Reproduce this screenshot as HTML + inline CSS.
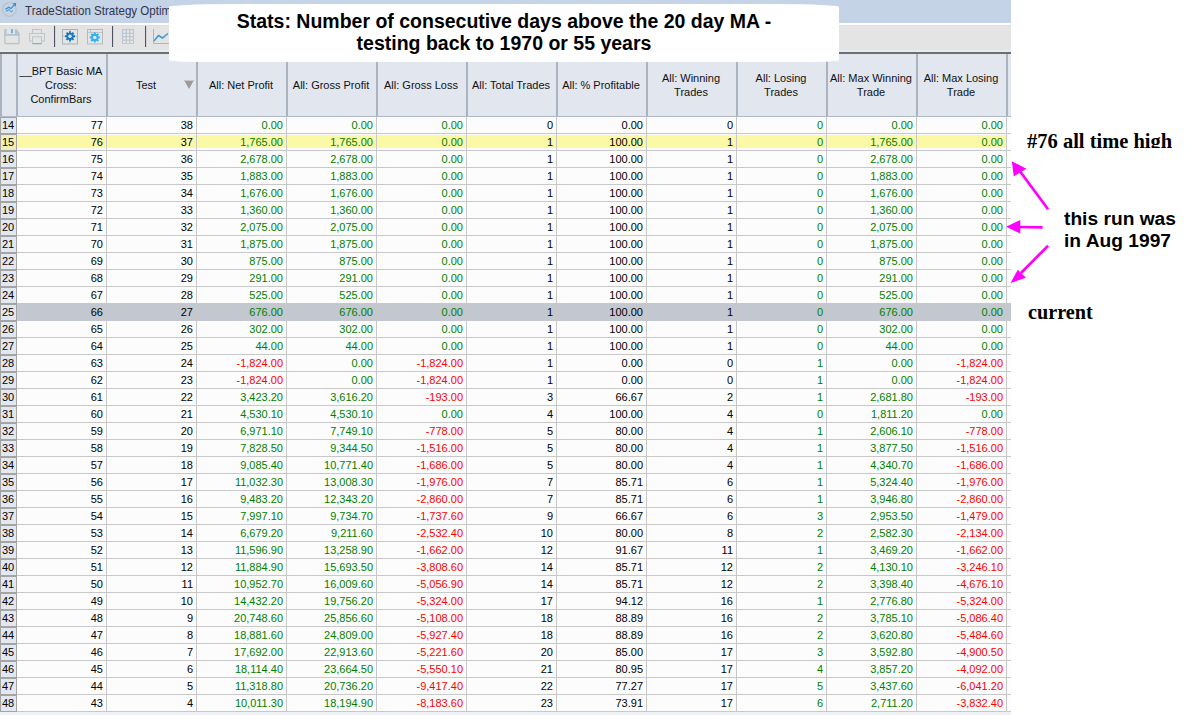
<!DOCTYPE html>
<html><head><meta charset="utf-8">
<style>
html,body{margin:0;padding:0;}
body{width:1195px;height:715px;overflow:hidden;background:#fff;position:relative;font-family:"Liberation Sans",sans-serif;}
.win{position:absolute;left:0;top:0;width:1011px;height:715px;background:#eef1f6;overflow:hidden;}
.title{position:absolute;left:0;top:0;width:1011px;height:23px;background:#c5d3e6;}
.title .t{position:absolute;left:25px;top:3px;font-size:13px;color:#33334a;transform:scaleX(0.89);transform-origin:0 0;white-space:nowrap;}
.wl{position:absolute;left:0;top:23px;width:1011px;height:2px;background:#fdfdfd;}
.tb{position:absolute;left:0;top:25px;width:1011px;height:25px;background:#e4e4e4;}
.tbl{position:absolute;left:0;top:50px;width:1011px;height:2px;background:#e6eaf1;}
.dk{position:absolute;left:0;top:52px;width:1011px;height:2px;background:#6e6e6e;}
.hdr{position:absolute;left:0;top:54px;width:1011px;height:62px;background:#e1e6ef;}
.hb{position:absolute;left:0;top:116px;width:1011px;height:1px;background:#b0bac6;}
.hc{position:absolute;top:54px;width:88px;height:62px;display:flex;align-items:center;justify-content:center;text-align:center;font-size:11px;line-height:14px;color:#111;}
.hs{position:absolute;top:54px;width:2px;height:63px;background:#a9b4c0;}
.hs0{position:absolute;top:54px;left:0;width:2px;height:63px;background:#a9b4c0;}
.row{position:absolute;left:0;width:1011px;height:16px;background:#fcfcfc;border-bottom:1px solid #c8c8c8;}
.row.hl::before{content:"";position:absolute;left:17px;width:990px;top:1px;height:13px;background:#fbf9a6;}
.row.hl u{background:#eef0b6;}
.row.sel::before{content:"";position:absolute;left:17px;right:0;top:-1px;height:18px;background:#c3c7cf;}
.row u{position:absolute;left:0;top:0;text-decoration:none;background:#e3e8f0;border:1px solid #a4a4a4;font-size:11px;line-height:15px;padding-left:1px;box-sizing:border-box;width:17px;height:17px;color:#000;}
.row i{position:absolute;top:0;width:86px;height:16px;font-style:normal;font-size:11px;line-height:16px;text-align:right;color:#000;}
.row i.g{color:#008000;}
.row i.r{color:#ff0000;}
.vl{position:absolute;top:117px;width:1px;height:595px;background:#c8c8c8;}
.bot{position:absolute;left:0;top:712px;width:1011px;height:3px;background:#eef1f5;}
.ovl{position:absolute;left:169px;top:4px;width:670px;height:58px;background:#fff;border-radius:60px 60px 30px 30px / 3px 3px 2px 2px;text-align:center;font-weight:bold;font-size:19.5px;line-height:22px;color:#000;}
.ovl div{padding-top:6px;}
.ann{position:absolute;font-weight:bold;color:#000;}
.serif{font-family:"Liberation Serif",serif;}
</style></head><body>
<div class="win">
  <div class="title">
    <svg style="position:absolute;left:0;top:0" width="20" height="20" viewBox="0 0 20 20">
      <circle cx="9.4" cy="9.5" r="6.8" fill="none" stroke="#bcc3cb" stroke-width="1.3"/>
      <circle cx="9.4" cy="9.5" r="5.2" fill="none" stroke="#cdd4dc" stroke-width="0.6"/>
      <path d="M5.5 9.3 L8.8 7.3 L10.8 8.6 L14.6 4.6" fill="none" stroke="#2f8fd6" stroke-width="1.2"/>
      <path d="M6 11.3 L9 9.6 L11.3 11.8 L12.8 10.6" fill="none" stroke="#2f8fd6" stroke-width="1"/>
      <path d="M12.6 3.4 L16.2 2.8 L15.8 6.4 Z" fill="#2f8fd6"/>
    </svg>
    <div class="t">TradeStation Strategy Optimization Report</div>
  </div>
  <div class="wl"></div>
  <div class="tb">
    <svg style="position:absolute;left:0;top:0" width="170" height="25" viewBox="0 0 170 25">
      <!-- save -->
      <g fill="#b6c3cc">
        <rect x="4.2" y="4" width="2.3" height="6.5"/>
        <path d="M15 4 H16.6 L19.6 8.2 V10.5 H15 Z"/>
        <rect x="4.2" y="9" width="15.4" height="1.6"/>
      </g>
      <rect x="4.85" y="9.6" width="14.1" height="9.1" rx="1" fill="none" stroke="#b6c3cc" stroke-width="1.3"/>
      <rect x="11" y="4" width="1.9" height="4.2" fill="#4dbdf3"/>
      <!-- printer -->
      <rect x="32.5" y="4.5" width="9" height="4" fill="none" stroke="#bcc6cd" stroke-width="1"/>
      <rect x="29.5" y="8.5" width="15" height="7.5" fill="none" stroke="#bcc6cd" stroke-width="1"/>
      <rect x="32.5" y="11.8" width="9" height="6.8" fill="#e4e4e4" stroke="#bcc6cd" stroke-width="1"/>
      <rect x="32.5" y="18.2" width="9" height="1" fill="#8ea1ad"/>
      <!-- sep -->
      <rect x="54" y="1" width="1.1" height="21" fill="#4c5361"/>
      <!-- gear box 1 -->
      <rect x="62.5" y="4.5" width="15" height="14.5" fill="none" stroke="#aab3ba" stroke-width="1"/>
      <path d="M70 5 V18.5 M63 11.3 H77" stroke="#b7c0c7" stroke-width="1.1"/>
      <g transform="translate(70,11.3)" fill="#1578c4">
        <circle r="3.6"/>
        <rect x="-1" y="-5" width="2" height="10"/>
        <rect x="-5" y="-1" width="10" height="2"/>
        <rect x="-1" y="-5" width="2" height="10" transform="rotate(45)"/>
        <rect x="-1" y="-5" width="2" height="10" transform="rotate(-45)"/>
        <circle r="1.7" fill="#e6e6e6"/>
      </g>
      <!-- gear box 2 -->
      <rect x="87.5" y="4.5" width="15" height="14.5" fill="none" stroke="#b3bcc2" stroke-width="1"/>
      <path d="M88 7.5 H102 M90.5 5 V7.5" stroke="#b3bcc2" stroke-width="0.8"/>
      <g transform="translate(94.8,12.4)" fill="#33b2f2">
        <circle r="3.6"/>
        <rect x="-1" y="-5" width="2" height="10"/>
        <rect x="-5" y="-1" width="10" height="2"/>
        <rect x="-1" y="-5" width="2" height="10" transform="rotate(45)"/>
        <rect x="-1" y="-5" width="2" height="10" transform="rotate(-45)"/>
        <circle r="1.7" fill="#e6e6e6"/>
      </g>
      <!-- sep -->
      <rect x="112" y="1" width="1.1" height="21" fill="#4c5361"/>
      <!-- grid -->
      <rect x="122" y="4" width="12" height="15" fill="#bcc6ce"/>
      <g fill="#e6e8ea">
        <rect x="123.2" y="5.3" width="2.4" height="2.3"/><rect x="126.8" y="5.3" width="2.4" height="2.3"/><rect x="130.4" y="5.3" width="2.4" height="2.3"/>
        <rect x="123.2" y="8.8" width="2.4" height="2.3"/><rect x="126.8" y="8.8" width="2.4" height="2.3"/><rect x="130.4" y="8.8" width="2.4" height="2.3"/>
        <rect x="123.2" y="12.3" width="2.4" height="2.3"/><rect x="126.8" y="12.3" width="2.4" height="2.3"/><rect x="130.4" y="12.3" width="2.4" height="2.3"/>
        <rect x="123.2" y="15.8" width="2.4" height="2.3"/><rect x="126.8" y="15.8" width="2.4" height="2.3"/><rect x="130.4" y="15.8" width="2.4" height="2.3"/>
      </g>
      <!-- sep -->
      <rect x="145" y="1" width="1.1" height="21" fill="#4c5361"/>
      <!-- chart -->
      <path d="M153.5 4 V18.5 H170" fill="none" stroke="#aab6c0" stroke-width="1"/>
      <path d="M154 16 L158.5 10.5 L162.5 13 L168 8.5" fill="none" stroke="#3a98d8" stroke-width="1.5"/>
    </svg>
  </div>
  <div class="tbl"></div><div style="position:absolute;left:0;top:25px;width:1011px;height:1px;background:#d9dfea"></div>
  <div class="dk"></div>
  <div class="hdr"></div>
  <div class="hs0"></div>
  
  <div class="hs" style="left:16px"></div><div class="hs" style="left:106px"></div><div class="hs" style="left:196px"></div><div class="hs" style="left:286px"></div><div class="hs" style="left:376px"></div><div class="hs" style="left:466px"></div><div class="hs" style="left:556px"></div><div class="hs" style="left:646px"></div><div class="hs" style="left:736px"></div><div class="hs" style="left:826px"></div><div class="hs" style="left:916px"></div><div class="hs" style="left:1006px"></div>
  <div class="hc" style="left:17px;width:88px"><span>__BPT Basic MA<br>Cross:<br>ConfirmBars</span></div><div class="hc" style="left:107px;width:78px"><span>Test</span></div><div class="hc" style="left:197px;width:88px"><span>All: Net Profit</span></div><div class="hc" style="left:287px;width:88px"><span>All: Gross Profit</span></div><div class="hc" style="left:377px;width:88px"><span>All: Gross Loss</span></div><div class="hc" style="left:467px;width:88px"><span>All: Total Trades</span></div><div class="hc" style="left:557px;width:88px"><span>All: % Profitable</span></div><div class="hc" style="left:647px;width:88px"><span>All: Winning<br>Trades</span></div><div class="hc" style="left:737px;width:88px"><span>All: Losing<br>Trades</span></div><div class="hc" style="left:827px;width:88px"><span>All: Max Winning<br>Trade</span></div><div class="hc" style="left:917px;width:88px"><span>All: Max Losing<br>Trade</span></div>
  <svg style="position:absolute;left:184px;top:80px" width="10" height="9" viewBox="0 0 10 9"><path d="M0 0 H10 L5 9 Z" fill="#9a9a9a"/><path d="M0.5 0.5 H9.5" stroke="#c8c8c8" stroke-width="1"/></svg>
  <div class="hb"></div>
  <div class="row" style="top:117px"><u>14</u><i class="b" style="left:17px">77</i><i class="b" style="left:107px">38</i><i class="g" style="left:197px">0.00</i><i class="g" style="left:287px">0.00</i><i class="g" style="left:377px">0.00</i><i class="b" style="left:467px">0</i><i class="b" style="left:557px">0.00</i><i class="b" style="left:647px">0</i><i class="g" style="left:737px">0</i><i class="g" style="left:827px">0.00</i><i class="g" style="left:917px">0.00</i></div>
<div class="row hl" style="top:134px"><u>15</u><i class="b" style="left:17px">76</i><i class="b" style="left:107px">37</i><i class="g" style="left:197px">1,765.00</i><i class="g" style="left:287px">1,765.00</i><i class="g" style="left:377px">0.00</i><i class="b" style="left:467px">1</i><i class="b" style="left:557px">100.00</i><i class="b" style="left:647px">1</i><i class="g" style="left:737px">0</i><i class="g" style="left:827px">1,765.00</i><i class="g" style="left:917px">0.00</i></div>
<div class="row" style="top:151px"><u>16</u><i class="b" style="left:17px">75</i><i class="b" style="left:107px">36</i><i class="g" style="left:197px">2,678.00</i><i class="g" style="left:287px">2,678.00</i><i class="g" style="left:377px">0.00</i><i class="b" style="left:467px">1</i><i class="b" style="left:557px">100.00</i><i class="b" style="left:647px">1</i><i class="g" style="left:737px">0</i><i class="g" style="left:827px">2,678.00</i><i class="g" style="left:917px">0.00</i></div>
<div class="row" style="top:168px"><u>17</u><i class="b" style="left:17px">74</i><i class="b" style="left:107px">35</i><i class="g" style="left:197px">1,883.00</i><i class="g" style="left:287px">1,883.00</i><i class="g" style="left:377px">0.00</i><i class="b" style="left:467px">1</i><i class="b" style="left:557px">100.00</i><i class="b" style="left:647px">1</i><i class="g" style="left:737px">0</i><i class="g" style="left:827px">1,883.00</i><i class="g" style="left:917px">0.00</i></div>
<div class="row" style="top:185px"><u>18</u><i class="b" style="left:17px">73</i><i class="b" style="left:107px">34</i><i class="g" style="left:197px">1,676.00</i><i class="g" style="left:287px">1,676.00</i><i class="g" style="left:377px">0.00</i><i class="b" style="left:467px">1</i><i class="b" style="left:557px">100.00</i><i class="b" style="left:647px">1</i><i class="g" style="left:737px">0</i><i class="g" style="left:827px">1,676.00</i><i class="g" style="left:917px">0.00</i></div>
<div class="row" style="top:202px"><u>19</u><i class="b" style="left:17px">72</i><i class="b" style="left:107px">33</i><i class="g" style="left:197px">1,360.00</i><i class="g" style="left:287px">1,360.00</i><i class="g" style="left:377px">0.00</i><i class="b" style="left:467px">1</i><i class="b" style="left:557px">100.00</i><i class="b" style="left:647px">1</i><i class="g" style="left:737px">0</i><i class="g" style="left:827px">1,360.00</i><i class="g" style="left:917px">0.00</i></div>
<div class="row" style="top:219px"><u>20</u><i class="b" style="left:17px">71</i><i class="b" style="left:107px">32</i><i class="g" style="left:197px">2,075.00</i><i class="g" style="left:287px">2,075.00</i><i class="g" style="left:377px">0.00</i><i class="b" style="left:467px">1</i><i class="b" style="left:557px">100.00</i><i class="b" style="left:647px">1</i><i class="g" style="left:737px">0</i><i class="g" style="left:827px">2,075.00</i><i class="g" style="left:917px">0.00</i></div>
<div class="row" style="top:236px"><u>21</u><i class="b" style="left:17px">70</i><i class="b" style="left:107px">31</i><i class="g" style="left:197px">1,875.00</i><i class="g" style="left:287px">1,875.00</i><i class="g" style="left:377px">0.00</i><i class="b" style="left:467px">1</i><i class="b" style="left:557px">100.00</i><i class="b" style="left:647px">1</i><i class="g" style="left:737px">0</i><i class="g" style="left:827px">1,875.00</i><i class="g" style="left:917px">0.00</i></div>
<div class="row" style="top:253px"><u>22</u><i class="b" style="left:17px">69</i><i class="b" style="left:107px">30</i><i class="g" style="left:197px">875.00</i><i class="g" style="left:287px">875.00</i><i class="g" style="left:377px">0.00</i><i class="b" style="left:467px">1</i><i class="b" style="left:557px">100.00</i><i class="b" style="left:647px">1</i><i class="g" style="left:737px">0</i><i class="g" style="left:827px">875.00</i><i class="g" style="left:917px">0.00</i></div>
<div class="row" style="top:270px"><u>23</u><i class="b" style="left:17px">68</i><i class="b" style="left:107px">29</i><i class="g" style="left:197px">291.00</i><i class="g" style="left:287px">291.00</i><i class="g" style="left:377px">0.00</i><i class="b" style="left:467px">1</i><i class="b" style="left:557px">100.00</i><i class="b" style="left:647px">1</i><i class="g" style="left:737px">0</i><i class="g" style="left:827px">291.00</i><i class="g" style="left:917px">0.00</i></div>
<div class="row" style="top:287px"><u>24</u><i class="b" style="left:17px">67</i><i class="b" style="left:107px">28</i><i class="g" style="left:197px">525.00</i><i class="g" style="left:287px">525.00</i><i class="g" style="left:377px">0.00</i><i class="b" style="left:467px">1</i><i class="b" style="left:557px">100.00</i><i class="b" style="left:647px">1</i><i class="g" style="left:737px">0</i><i class="g" style="left:827px">525.00</i><i class="g" style="left:917px">0.00</i></div>
<div class="row sel" style="top:304px"><u>25</u><i class="b" style="left:17px">66</i><i class="b" style="left:107px">27</i><i class="g" style="left:197px">676.00</i><i class="g" style="left:287px">676.00</i><i class="g" style="left:377px">0.00</i><i class="b" style="left:467px">1</i><i class="b" style="left:557px">100.00</i><i class="b" style="left:647px">1</i><i class="g" style="left:737px">0</i><i class="g" style="left:827px">676.00</i><i class="g" style="left:917px">0.00</i></div>
<div class="row" style="top:321px"><u>26</u><i class="b" style="left:17px">65</i><i class="b" style="left:107px">26</i><i class="g" style="left:197px">302.00</i><i class="g" style="left:287px">302.00</i><i class="g" style="left:377px">0.00</i><i class="b" style="left:467px">1</i><i class="b" style="left:557px">100.00</i><i class="b" style="left:647px">1</i><i class="g" style="left:737px">0</i><i class="g" style="left:827px">302.00</i><i class="g" style="left:917px">0.00</i></div>
<div class="row" style="top:338px"><u>27</u><i class="b" style="left:17px">64</i><i class="b" style="left:107px">25</i><i class="g" style="left:197px">44.00</i><i class="g" style="left:287px">44.00</i><i class="g" style="left:377px">0.00</i><i class="b" style="left:467px">1</i><i class="b" style="left:557px">100.00</i><i class="b" style="left:647px">1</i><i class="g" style="left:737px">0</i><i class="g" style="left:827px">44.00</i><i class="g" style="left:917px">0.00</i></div>
<div class="row" style="top:355px"><u>28</u><i class="b" style="left:17px">63</i><i class="b" style="left:107px">24</i><i class="r" style="left:197px">-1,824.00</i><i class="g" style="left:287px">0.00</i><i class="r" style="left:377px">-1,824.00</i><i class="b" style="left:467px">1</i><i class="b" style="left:557px">0.00</i><i class="b" style="left:647px">0</i><i class="g" style="left:737px">1</i><i class="g" style="left:827px">0.00</i><i class="r" style="left:917px">-1,824.00</i></div>
<div class="row" style="top:372px"><u>29</u><i class="b" style="left:17px">62</i><i class="b" style="left:107px">23</i><i class="r" style="left:197px">-1,824.00</i><i class="g" style="left:287px">0.00</i><i class="r" style="left:377px">-1,824.00</i><i class="b" style="left:467px">1</i><i class="b" style="left:557px">0.00</i><i class="b" style="left:647px">0</i><i class="g" style="left:737px">1</i><i class="g" style="left:827px">0.00</i><i class="r" style="left:917px">-1,824.00</i></div>
<div class="row" style="top:389px"><u>30</u><i class="b" style="left:17px">61</i><i class="b" style="left:107px">22</i><i class="g" style="left:197px">3,423.20</i><i class="g" style="left:287px">3,616.20</i><i class="r" style="left:377px">-193.00</i><i class="b" style="left:467px">3</i><i class="b" style="left:557px">66.67</i><i class="b" style="left:647px">2</i><i class="g" style="left:737px">1</i><i class="g" style="left:827px">2,681.80</i><i class="r" style="left:917px">-193.00</i></div>
<div class="row" style="top:406px"><u>31</u><i class="b" style="left:17px">60</i><i class="b" style="left:107px">21</i><i class="g" style="left:197px">4,530.10</i><i class="g" style="left:287px">4,530.10</i><i class="g" style="left:377px">0.00</i><i class="b" style="left:467px">4</i><i class="b" style="left:557px">100.00</i><i class="b" style="left:647px">4</i><i class="g" style="left:737px">0</i><i class="g" style="left:827px">1,811.20</i><i class="g" style="left:917px">0.00</i></div>
<div class="row" style="top:423px"><u>32</u><i class="b" style="left:17px">59</i><i class="b" style="left:107px">20</i><i class="g" style="left:197px">6,971.10</i><i class="g" style="left:287px">7,749.10</i><i class="r" style="left:377px">-778.00</i><i class="b" style="left:467px">5</i><i class="b" style="left:557px">80.00</i><i class="b" style="left:647px">4</i><i class="g" style="left:737px">1</i><i class="g" style="left:827px">2,606.10</i><i class="r" style="left:917px">-778.00</i></div>
<div class="row" style="top:440px"><u>33</u><i class="b" style="left:17px">58</i><i class="b" style="left:107px">19</i><i class="g" style="left:197px">7,828.50</i><i class="g" style="left:287px">9,344.50</i><i class="r" style="left:377px">-1,516.00</i><i class="b" style="left:467px">5</i><i class="b" style="left:557px">80.00</i><i class="b" style="left:647px">4</i><i class="g" style="left:737px">1</i><i class="g" style="left:827px">3,877.50</i><i class="r" style="left:917px">-1,516.00</i></div>
<div class="row" style="top:457px"><u>34</u><i class="b" style="left:17px">57</i><i class="b" style="left:107px">18</i><i class="g" style="left:197px">9,085.40</i><i class="g" style="left:287px">10,771.40</i><i class="r" style="left:377px">-1,686.00</i><i class="b" style="left:467px">5</i><i class="b" style="left:557px">80.00</i><i class="b" style="left:647px">4</i><i class="g" style="left:737px">1</i><i class="g" style="left:827px">4,340.70</i><i class="r" style="left:917px">-1,686.00</i></div>
<div class="row" style="top:474px"><u>35</u><i class="b" style="left:17px">56</i><i class="b" style="left:107px">17</i><i class="g" style="left:197px">11,032.30</i><i class="g" style="left:287px">13,008.30</i><i class="r" style="left:377px">-1,976.00</i><i class="b" style="left:467px">7</i><i class="b" style="left:557px">85.71</i><i class="b" style="left:647px">6</i><i class="g" style="left:737px">1</i><i class="g" style="left:827px">5,324.40</i><i class="r" style="left:917px">-1,976.00</i></div>
<div class="row" style="top:491px"><u>36</u><i class="b" style="left:17px">55</i><i class="b" style="left:107px">16</i><i class="g" style="left:197px">9,483.20</i><i class="g" style="left:287px">12,343.20</i><i class="r" style="left:377px">-2,860.00</i><i class="b" style="left:467px">7</i><i class="b" style="left:557px">85.71</i><i class="b" style="left:647px">6</i><i class="g" style="left:737px">1</i><i class="g" style="left:827px">3,946.80</i><i class="r" style="left:917px">-2,860.00</i></div>
<div class="row" style="top:508px"><u>37</u><i class="b" style="left:17px">54</i><i class="b" style="left:107px">15</i><i class="g" style="left:197px">7,997.10</i><i class="g" style="left:287px">9,734.70</i><i class="r" style="left:377px">-1,737.60</i><i class="b" style="left:467px">9</i><i class="b" style="left:557px">66.67</i><i class="b" style="left:647px">6</i><i class="g" style="left:737px">3</i><i class="g" style="left:827px">2,953.50</i><i class="r" style="left:917px">-1,479.00</i></div>
<div class="row" style="top:525px"><u>38</u><i class="b" style="left:17px">53</i><i class="b" style="left:107px">14</i><i class="g" style="left:197px">6,679.20</i><i class="g" style="left:287px">9,211.60</i><i class="r" style="left:377px">-2,532.40</i><i class="b" style="left:467px">10</i><i class="b" style="left:557px">80.00</i><i class="b" style="left:647px">8</i><i class="g" style="left:737px">2</i><i class="g" style="left:827px">2,582.30</i><i class="r" style="left:917px">-2,134.00</i></div>
<div class="row" style="top:542px"><u>39</u><i class="b" style="left:17px">52</i><i class="b" style="left:107px">13</i><i class="g" style="left:197px">11,596.90</i><i class="g" style="left:287px">13,258.90</i><i class="r" style="left:377px">-1,662.00</i><i class="b" style="left:467px">12</i><i class="b" style="left:557px">91.67</i><i class="b" style="left:647px">11</i><i class="g" style="left:737px">1</i><i class="g" style="left:827px">3,469.20</i><i class="r" style="left:917px">-1,662.00</i></div>
<div class="row" style="top:559px"><u>40</u><i class="b" style="left:17px">51</i><i class="b" style="left:107px">12</i><i class="g" style="left:197px">11,884.90</i><i class="g" style="left:287px">15,693.50</i><i class="r" style="left:377px">-3,808.60</i><i class="b" style="left:467px">14</i><i class="b" style="left:557px">85.71</i><i class="b" style="left:647px">12</i><i class="g" style="left:737px">2</i><i class="g" style="left:827px">4,130.10</i><i class="r" style="left:917px">-3,246.10</i></div>
<div class="row" style="top:576px"><u>41</u><i class="b" style="left:17px">50</i><i class="b" style="left:107px">11</i><i class="g" style="left:197px">10,952.70</i><i class="g" style="left:287px">16,009.60</i><i class="r" style="left:377px">-5,056.90</i><i class="b" style="left:467px">14</i><i class="b" style="left:557px">85.71</i><i class="b" style="left:647px">12</i><i class="g" style="left:737px">2</i><i class="g" style="left:827px">3,398.40</i><i class="r" style="left:917px">-4,676.10</i></div>
<div class="row" style="top:593px"><u>42</u><i class="b" style="left:17px">49</i><i class="b" style="left:107px">10</i><i class="g" style="left:197px">14,432.20</i><i class="g" style="left:287px">19,756.20</i><i class="r" style="left:377px">-5,324.00</i><i class="b" style="left:467px">17</i><i class="b" style="left:557px">94.12</i><i class="b" style="left:647px">16</i><i class="g" style="left:737px">1</i><i class="g" style="left:827px">2,776.80</i><i class="r" style="left:917px">-5,324.00</i></div>
<div class="row" style="top:610px"><u>43</u><i class="b" style="left:17px">48</i><i class="b" style="left:107px">9</i><i class="g" style="left:197px">20,748.60</i><i class="g" style="left:287px">25,856.60</i><i class="r" style="left:377px">-5,108.00</i><i class="b" style="left:467px">18</i><i class="b" style="left:557px">88.89</i><i class="b" style="left:647px">16</i><i class="g" style="left:737px">2</i><i class="g" style="left:827px">3,785.10</i><i class="r" style="left:917px">-5,086.40</i></div>
<div class="row" style="top:627px"><u>44</u><i class="b" style="left:17px">47</i><i class="b" style="left:107px">8</i><i class="g" style="left:197px">18,881.60</i><i class="g" style="left:287px">24,809.00</i><i class="r" style="left:377px">-5,927.40</i><i class="b" style="left:467px">18</i><i class="b" style="left:557px">88.89</i><i class="b" style="left:647px">16</i><i class="g" style="left:737px">2</i><i class="g" style="left:827px">3,620.80</i><i class="r" style="left:917px">-5,484.60</i></div>
<div class="row" style="top:644px"><u>45</u><i class="b" style="left:17px">46</i><i class="b" style="left:107px">7</i><i class="g" style="left:197px">17,692.00</i><i class="g" style="left:287px">22,913.60</i><i class="r" style="left:377px">-5,221.60</i><i class="b" style="left:467px">20</i><i class="b" style="left:557px">85.00</i><i class="b" style="left:647px">17</i><i class="g" style="left:737px">3</i><i class="g" style="left:827px">3,592.80</i><i class="r" style="left:917px">-4,900.50</i></div>
<div class="row" style="top:661px"><u>46</u><i class="b" style="left:17px">45</i><i class="b" style="left:107px">6</i><i class="g" style="left:197px">18,114.40</i><i class="g" style="left:287px">23,664.50</i><i class="r" style="left:377px">-5,550.10</i><i class="b" style="left:467px">21</i><i class="b" style="left:557px">80.95</i><i class="b" style="left:647px">17</i><i class="g" style="left:737px">4</i><i class="g" style="left:827px">3,857.20</i><i class="r" style="left:917px">-4,092.00</i></div>
<div class="row" style="top:678px"><u>47</u><i class="b" style="left:17px">44</i><i class="b" style="left:107px">5</i><i class="g" style="left:197px">11,318.80</i><i class="g" style="left:287px">20,736.20</i><i class="r" style="left:377px">-9,417.40</i><i class="b" style="left:467px">22</i><i class="b" style="left:557px">77.27</i><i class="b" style="left:647px">17</i><i class="g" style="left:737px">5</i><i class="g" style="left:827px">3,437.60</i><i class="r" style="left:917px">-6,041.20</i></div>
<div class="row" style="top:695px"><u>48</u><i class="b" style="left:17px">43</i><i class="b" style="left:107px">4</i><i class="g" style="left:197px">10,011.30</i><i class="g" style="left:287px">18,194.90</i><i class="r" style="left:377px">-8,183.60</i><i class="b" style="left:467px">23</i><i class="b" style="left:557px">73.91</i><i class="b" style="left:647px">17</i><i class="g" style="left:737px">6</i><i class="g" style="left:827px">2,711.20</i><i class="r" style="left:917px">-3,832.40</i></div>
  <div class="vl" style="left:106px"></div><div class="vl" style="left:196px"></div><div class="vl" style="left:286px"></div><div class="vl" style="left:376px"></div><div class="vl" style="left:466px"></div><div class="vl" style="left:556px"></div><div class="vl" style="left:646px"></div><div class="vl" style="left:736px"></div><div class="vl" style="left:826px"></div><div class="vl" style="left:916px"></div><div class="vl" style="left:1006px"></div>
  <div class="bot"></div>
</div>
<div class="ovl"><div>Stats: Number of consecutive days above the 20 day MA -<br>testing back to 1970 or 55 years</div></div>
<div class="ann serif" style="left:1027px;top:129px;font-size:20.5px;height:19px;overflow:hidden;line-height:24px;white-space:nowrap;">#76 all time high</div>
<div class="ann" style="left:1064px;top:208px;font-size:19.2px;line-height:22px;white-space:nowrap;">this run was<br>in Aug 1997</div>
<div class="ann serif" style="left:1028px;top:300px;font-size:20.2px;line-height:24px;">current</div>
<svg style="position:absolute;left:1000px;top:150px" width="60" height="140" viewBox="0 0 60 140">
  <g stroke="#ff00ff" stroke-width="2.7" fill="#ff00ff" stroke-linecap="butt">
    <path d="M48.1 59.2 L19 20" fill="none"/>
    <path d="M11.8 11.2 L26.4 18.7 L13.8 26.4 Z" stroke="none"/>
    <path d="M42.6 77.4 L18 77" fill="none"/>
    <path d="M6.1 76.7 L20.3 70 L20.3 83.6 Z" stroke="none"/>
    <path d="M48.1 95.7 L21 123" fill="none"/>
    <path d="M10.5 132.9 L17.8 119.7 L26 127.8 Z" stroke="none"/>
  </g>
</svg>
</body></html>
